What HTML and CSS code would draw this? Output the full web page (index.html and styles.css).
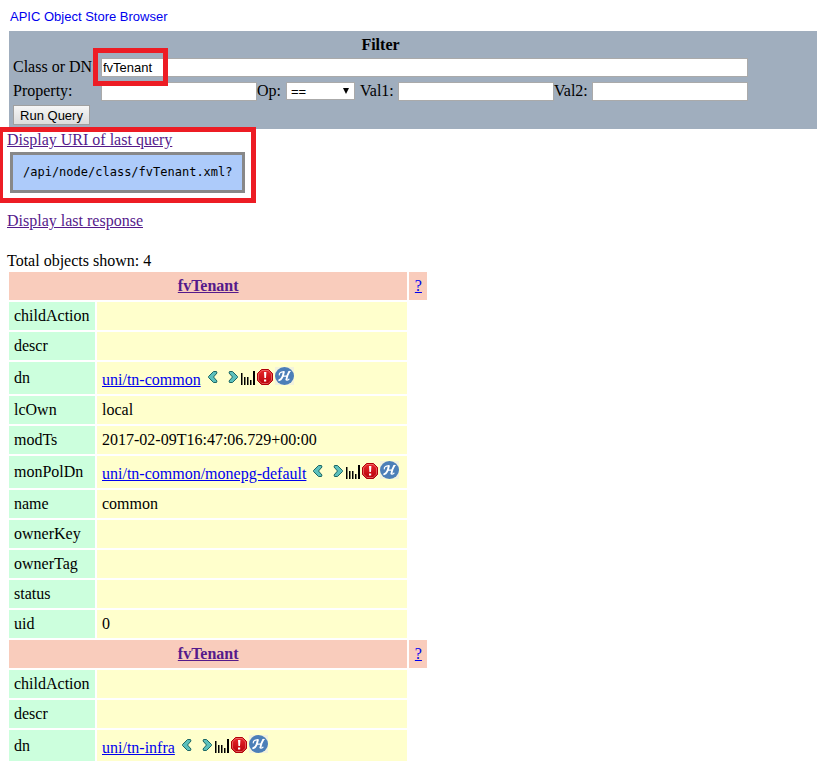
FILE: index.html
```
<!DOCTYPE html>
<html lang="en">
<head>
<meta charset="utf-8">
<title>APIC Object Store Browser</title>
<link rel="stylesheet" href="styles.css">
</head>
<body>
<svg class="defs" aria-hidden="true">
  <defs>
    <linearGradient id="red" x1="0" y1="0" x2="0" y2="1">
      <stop offset="0" stop-color="#e8282c"/>
      <stop offset="1" stop-color="#b80008"/>
    </linearGradient>
    <symbol id="prev" viewBox="0 0 16 18">
      <path d="M8.500 4.500h3L12 6L8.500 10L12 14l-.5 1.500h-3L3.500 10.500v-1z" fill="#5cc0bc" stroke="#1c6664" stroke-linejoin="round"/>
    </symbol>
    <symbol id="next" viewBox="0 0 16 18">
      <path d="M7.500 4.500h-3L4 6L7.500 10L4 14l.5 1.500h3L12.500 10.500v-1z" fill="#5cc0bc" stroke="#1c6664" stroke-linejoin="round"/>
    </symbol>
    <symbol id="stats" viewBox="0 0 16 18">
      <path d="M0 6h1.500v12H0zM3 10h1.500v8H3zM6 10h1.500v8H6zM9 13h1.500v5H9zM12 4h2v14h-2z" fill="#000"/>
    </symbol>
    <symbol id="fault" viewBox="0 0 16 18">
      <path d="M4.500 2.500h7l4 4v7l-4 4h-7l-4-4v-7z" fill="url(#red)" stroke="#b00008"/>
      <path d="M4.900 3.500h6.200l3.400 3.400v6.200l-3.400 3.400H4.900l-3.400-3.400V6.900z" fill="none" stroke="#f08c88" stroke-width=".6"/>
      <path d="M7 5h2.400L9 11H7.400zM7 12.500h2.200v2H7z" fill="#fff"/>
    </symbol>
    <symbol id="health" viewBox="0 0 24 18">
      <path d="M2 0h19v18H2z" fill="#f2f2dc"/>
      <ellipse cx="11.500" cy="9" rx="9.500" ry="9" fill="#4c7fb8"/>
      <g fill="none" stroke="#fff" stroke-linecap="round">
        <path d="M10.800 5C10.200 8.500 9 12.500 6.200 13.200M16.200 4.800C14.800 7 13.800 10 13.400 12.600" stroke-width="1.900"/>
        <path d="M10.800 5C8.500 4.600 6 5.600 6.300 7.800M16.200 4.800L17.200 4.500M13.400 12.600C14.200 13.400 15.300 13 16 12.200M9.800 9.200H14.600" stroke-width="1.200"/>
      </g>
    </symbol>
  </defs>
</svg>

<header class="title"><a href="#">APIC Object Store Browser</a></header>

<form class="filter">
  <div class="filter-grid">
    <h1 class="filter-heading">Filter</h1>
    <label for="cls">Class or DN:</label>
    <div class="class-field">
      <input id="cls" type="text" value="fvTenant">
      <span class="mark mark-class"></span>
    </div>
    <label for="prop">Property:</label>
    <div class="fields">
      <input id="prop" type="text">
      <label for="op">Op:</label>
      <div class="select"><select id="op"><option>==</option></select></div>
      <label class="val1" for="val1">Val1:</label>
      <input id="val1" type="text">
      <label for="val2">Val2:</label>
      <input id="val2" type="text">
    </div>
    <button type="button">Run Query</button>
  </div>
</form>

<section class="query">
  <a class="visited" href="#">Display URI of last query</a>
  <pre class="uri">/api/node/class/fvTenant.xml?</pre>
  <span class="mark mark-query"></span>
</section>
<p class="response"><a class="visited" href="#">Display last response</a></p>
<p class="total">Total objects shown: 4</p>

<table class="objects">
  <tbody>
    <tr class="head"><th colspan="2"><a class="visited" href="#">fvTenant</a></th><td><a href="#">?</a></td></tr>
    <tr><th>childAction</th><td></td></tr>
    <tr><th>descr</th><td></td></tr>
    <tr><th>dn</th><td><a href="#">uni/tn-common</a> <svg class="icon"><use href="#prev"/></svg> <svg class="icon"><use href="#next"/></svg><svg class="icon"><use href="#stats"/></svg><svg class="icon"><use href="#fault"/></svg><svg class="icon wide"><use href="#health"/></svg></td></tr>
    <tr><th>lcOwn</th><td>local</td></tr>
    <tr><th>modTs</th><td>2017-02-09T16:47:06.729+00:00</td></tr>
    <tr><th>monPolDn</th><td><a href="#">uni/tn-common/monepg-default</a> <svg class="icon"><use href="#prev"/></svg> <svg class="icon"><use href="#next"/></svg><svg class="icon"><use href="#stats"/></svg><svg class="icon"><use href="#fault"/></svg><svg class="icon wide"><use href="#health"/></svg></td></tr>
    <tr><th>name</th><td>common</td></tr>
    <tr><th>ownerKey</th><td></td></tr>
    <tr><th>ownerTag</th><td></td></tr>
    <tr><th>status</th><td></td></tr>
    <tr><th>uid</th><td>0</td></tr>
    <tr class="head"><th colspan="2"><a class="visited" href="#">fvTenant</a></th><td><a href="#">?</a></td></tr>
    <tr><th>childAction</th><td></td></tr>
    <tr><th>descr</th><td></td></tr>
    <tr><th>dn</th><td><a href="#">uni/tn-infra</a> <svg class="icon"><use href="#prev"/></svg> <svg class="icon"><use href="#next"/></svg><svg class="icon"><use href="#stats"/></svg><svg class="icon"><use href="#fault"/></svg><svg class="icon wide"><use href="#health"/></svg></td></tr>
  </tbody>
</table>
</body>
</html>
```
FILE: styles.css
```
* {
  box-sizing: border-box;
}

body {
  margin: 0;
  padding: 8px 0 0 7px;
  font: 16px/18px "Liberation Serif", serif;
  color: #000;
  background: #fff;
}

a {
  color: #00e;
}

a.visited {
  color: #551a8b;
}

.defs {
  position: absolute;
  width: 0;
  height: 0;
}

.title {
  padding-left: 3px;
  font: 13px/18px "Liberation Sans", sans-serif;
}

.title a {
  text-decoration: none;
}

.filter {
  margin: 5px 0 0 2px;
  padding: 4px 4px 2px;
  background: #a0aebe;
}

.filter-grid {
  display: grid;
  grid-template-columns: 88px 647px;
  grid-template-rows: 20px 24px 24px 24px;
  align-items: center;
  width: max-content;
}

.filter-heading {
  grid-column: 1 / -1;
  margin: 0;
  font-size: 16px;
  line-height: 18px;
  text-align: center;
}

.filter label {
  white-space: nowrap;
}

.class-field {
  position: relative;
  display: flex;
}

.class-field input {
  flex: 1;
}

.fields {
  display: grid;
  grid-template-columns: 156px 29px 69px 43px 156px 38px 156px;
  align-items: center;
}

.fields .val1 {
  padding-left: 5px;
}

input,
select {
  height: 19px;
  min-width: 0;
  margin: 0;
  border: 1px solid #aaa;
  border-radius: 0;
  padding: 0 1px;
  background: #fff;
  color: #000;
  font: 13px "Liberation Sans", sans-serif;
}

.select {
  position: relative;
  display: flex;
}

.select::after {
  content: "";
  position: absolute;
  right: 6px;
  top: 6px;
  border: solid transparent;
  border-width: 6px 3px 0;
  border-top-color: #000;
  pointer-events: none;
}

select {
  appearance: none;
  width: 100%;
  height: 18px;
  padding: 0 4px;
}

button {
  grid-column: 1 / -1;
  justify-self: start;
  width: 77px;
  height: 20px;
  padding: 0;
  border: 1px solid #a0a0a0;
  border-radius: 0;
  background: linear-gradient(#f6f6f6, #dcdcdc);
  color: #000;
  font: 13px "Liberation Sans", sans-serif;
}

.mark {
  position: absolute;
  border: 5px solid #ed1c24;
  pointer-events: none;
}

.mark-class {
  left: -8px;
  top: -10px;
  width: 75px;
  height: 38px;
}

.query {
  position: relative;
  padding-top: 2px;
}

.uri {
  width: max-content;
  margin: 3px;
  padding: 10px 9px 10px 10px;
  border: 3px solid #888;
  background: #adcbfa;
  font: 12px/15px "DejaVu Sans Mono", monospace;
}

.mark-query {
  left: -9px;
  top: -2px;
  width: 258px;
  height: 76px;
}

.response {
  margin: 19px 0 22px;
}

.total {
  margin: 0;
}

.objects {
  border-spacing: 2px;
}

.objects th,
.objects td {
  height: 28px;
  padding: 5px;
  font-weight: normal;
  text-align: left;
  white-space: nowrap;
}

.objects th {
  min-width: 86px;
  background: #cfd;
}

.objects td {
  background: #ffc;
}

.objects .head th,
.objects .head td {
  background: #f9ccbc;
  text-align: center;
}

.objects .head th {
  font-weight: bold;
}

.objects .head td {
  min-width: 18px;
}

.icon {
  width: 16px;
  height: 18px;
  vertical-align: baseline;
}

.wide {
  width: 24px;
}
```
